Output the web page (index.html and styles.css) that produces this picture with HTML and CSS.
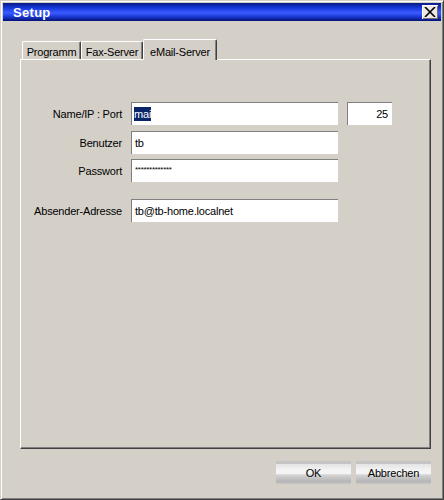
FILE: index.html
```html
<!DOCTYPE html>
<html>
<head>
<meta charset="utf-8">
<link rel="stylesheet" href="styles.css">
</head>
<body>
<div class="window">
  <div class="titlebar">
    <span class="title">Setup</span>
    <span class="close"><svg width="12" height="10" viewBox="0 0 12 10"><path d="M1 0 L11 10 M11 0 L1 10" stroke="#000" stroke-width="1.6"/></svg></span>
  </div>
  <div class="body">
    <div class="tabs">
      <div class="tab t1">Programm</div>
      <div class="tab t2">Fax-Server</div>
      <div class="tab t3 active">eMail-Server</div>
    </div>
    <div class="panel">
      <div class="row r1">
        <label class="lbl">Name/IP : Port</label>
        <div class="field wide"><span class="sel">mai</span></div>
        <div class="field port">25</div>
      </div>
      <div class="row r2">
        <label class="lbl">Benutzer</label>
        <div class="field wide">tb</div>
      </div>
      <div class="row r3">
        <label class="lbl">Passwort</label>
        <div class="field wide pw">*************</div>
      </div>
      <div class="row r4">
        <label class="lbl">Absender-Adresse</label>
        <div class="field wide">tb@tb-home.localnet</div>
      </div>
    </div>
    <div class="buttons">
      <div class="btn">OK</div>
      <div class="btn">Abbrechen</div>
    </div>
  </div>
</div>
</body>
</html>
```
FILE: styles.css
```css
html, body {
  margin: 0;
  padding: 0;
  background: #d4d0c8;
}
body {
  font-family: "Liberation Sans", Arial, sans-serif;
  font-size: 11px;
  letter-spacing: -0.2px;
  color: #000;
}
.window {
  box-sizing: border-box;
  width: 444px;
  height: 500px;
  background: #d4d0c8;
  border-top: 1px solid #d4d0c8;
  border-left: 1px solid #d4d0c8;
  border-right: 1px solid #404040;
  border-bottom: 1px solid #404040;
  box-shadow: inset 1px 1px 0 #fff, inset -1px -1px 0 #808080;
  padding: 2px;
  display: flex;
  flex-direction: column;
}
.titlebar {
  height: 18px;
  display: flex;
  align-items: center;
  justify-content: space-between;
  padding: 0 3px 0 10px;
  background: linear-gradient(to bottom, #0a1a80 0%, #1030c8 20%, #2848f0 40%, #3a5cff 55%, #1c3ad8 75%, #061072 100%);
}
.title {
  color: #fff;
  font-weight: bold;
  font-size: 13px;
  letter-spacing: 0.3px;
}
.close {
  width: 16px;
  height: 14px;
  background: #ece9e4;
  box-shadow: inset 1px 1px 0 #fff, inset -1px -1px 0 #707070;
  display: flex;
  align-items: center;
  justify-content: center;
}
.body {
  flex: 1;
  display: flex;
  flex-direction: column;
  padding: 0 10px 0 17px;
}
.tabs {
  display: flex;
  align-items: flex-end;
  margin-top: 18px;
  padding-left: 2px;
  height: 20px;
  position: relative;
  z-index: 1;
}
.tab {
  box-sizing: border-box;
  height: 18px;
  line-height: 20px;
  white-space: nowrap;
  text-align: center;
  border-top: 1px solid #fff;
  border-left: 1px solid #fff;
  border-right: 1px solid #404040;
  box-shadow: inset -1px 0 0 #808080;
  border-radius: 2px 2px 0 0;
}
.t1 { width: 59px; }
.t2 { width: 62px; }
.t3 { width: 74px; }
.tab.active {
  height: 21px;
  margin-bottom: -1px;
  line-height: 25px;
  background: #d4d0c8;
}
.panel {
  box-sizing: border-box;
  height: 390px;
  border-top: 1px solid #fff;
  border-left: 1px solid #fff;
  border-right: 1px solid #404040;
  border-bottom: 1px solid #404040;
  box-shadow: inset -1px -1px 0 #808080;
  padding-top: 42px;
  display: flex;
  flex-direction: column;
}
.row {
  display: flex;
  align-items: center;
  height: 23px;
}
.r2 { margin-top: 6px; }
.r3 { margin-top: 5px; }
.r4 { margin-top: 17px; }
.lbl {
  width: 101px;
  text-align: right;
  color: #000;
}
.field {
  box-sizing: border-box;
  height: 23px;
  background: #fff;
  border-top: 1px solid #808080;
  border-left: 1px solid #808080;
  padding-left: 3px;
  display: flex;
  align-items: center;
}
.wide {
  width: 207px;
  margin-left: 9px;
}
.port {
  width: 45px;
  margin-left: 9px;
  justify-content: flex-end;
  padding-right: 4px;
}
.pw {
  font-size: 8px;
  letter-spacing: -0.3px;
  align-items: flex-start;
  padding-top: 5px;
}
.sel {
  background: #0a246a;
  color: #fff;
  padding: 1px 0;
  margin-left: -1px;
}
.buttons {
  display: flex;
  justify-content: flex-end;
  gap: 5px;
  margin-top: 12px;
}
.btn {
  width: 75px;
  height: 23px;
  display: flex;
  align-items: center;
  justify-content: center;
  background: linear-gradient(to bottom, #c4c4c4 0%, #c4c4c4 12%, #e4e4e4 14%, #f4f4f4 40%, #f4f4f4 55%, #d4d4d4 60%, #c4c4c4 75%, #b4b4b4 90%, #c8c8c8 100%);
}
```
